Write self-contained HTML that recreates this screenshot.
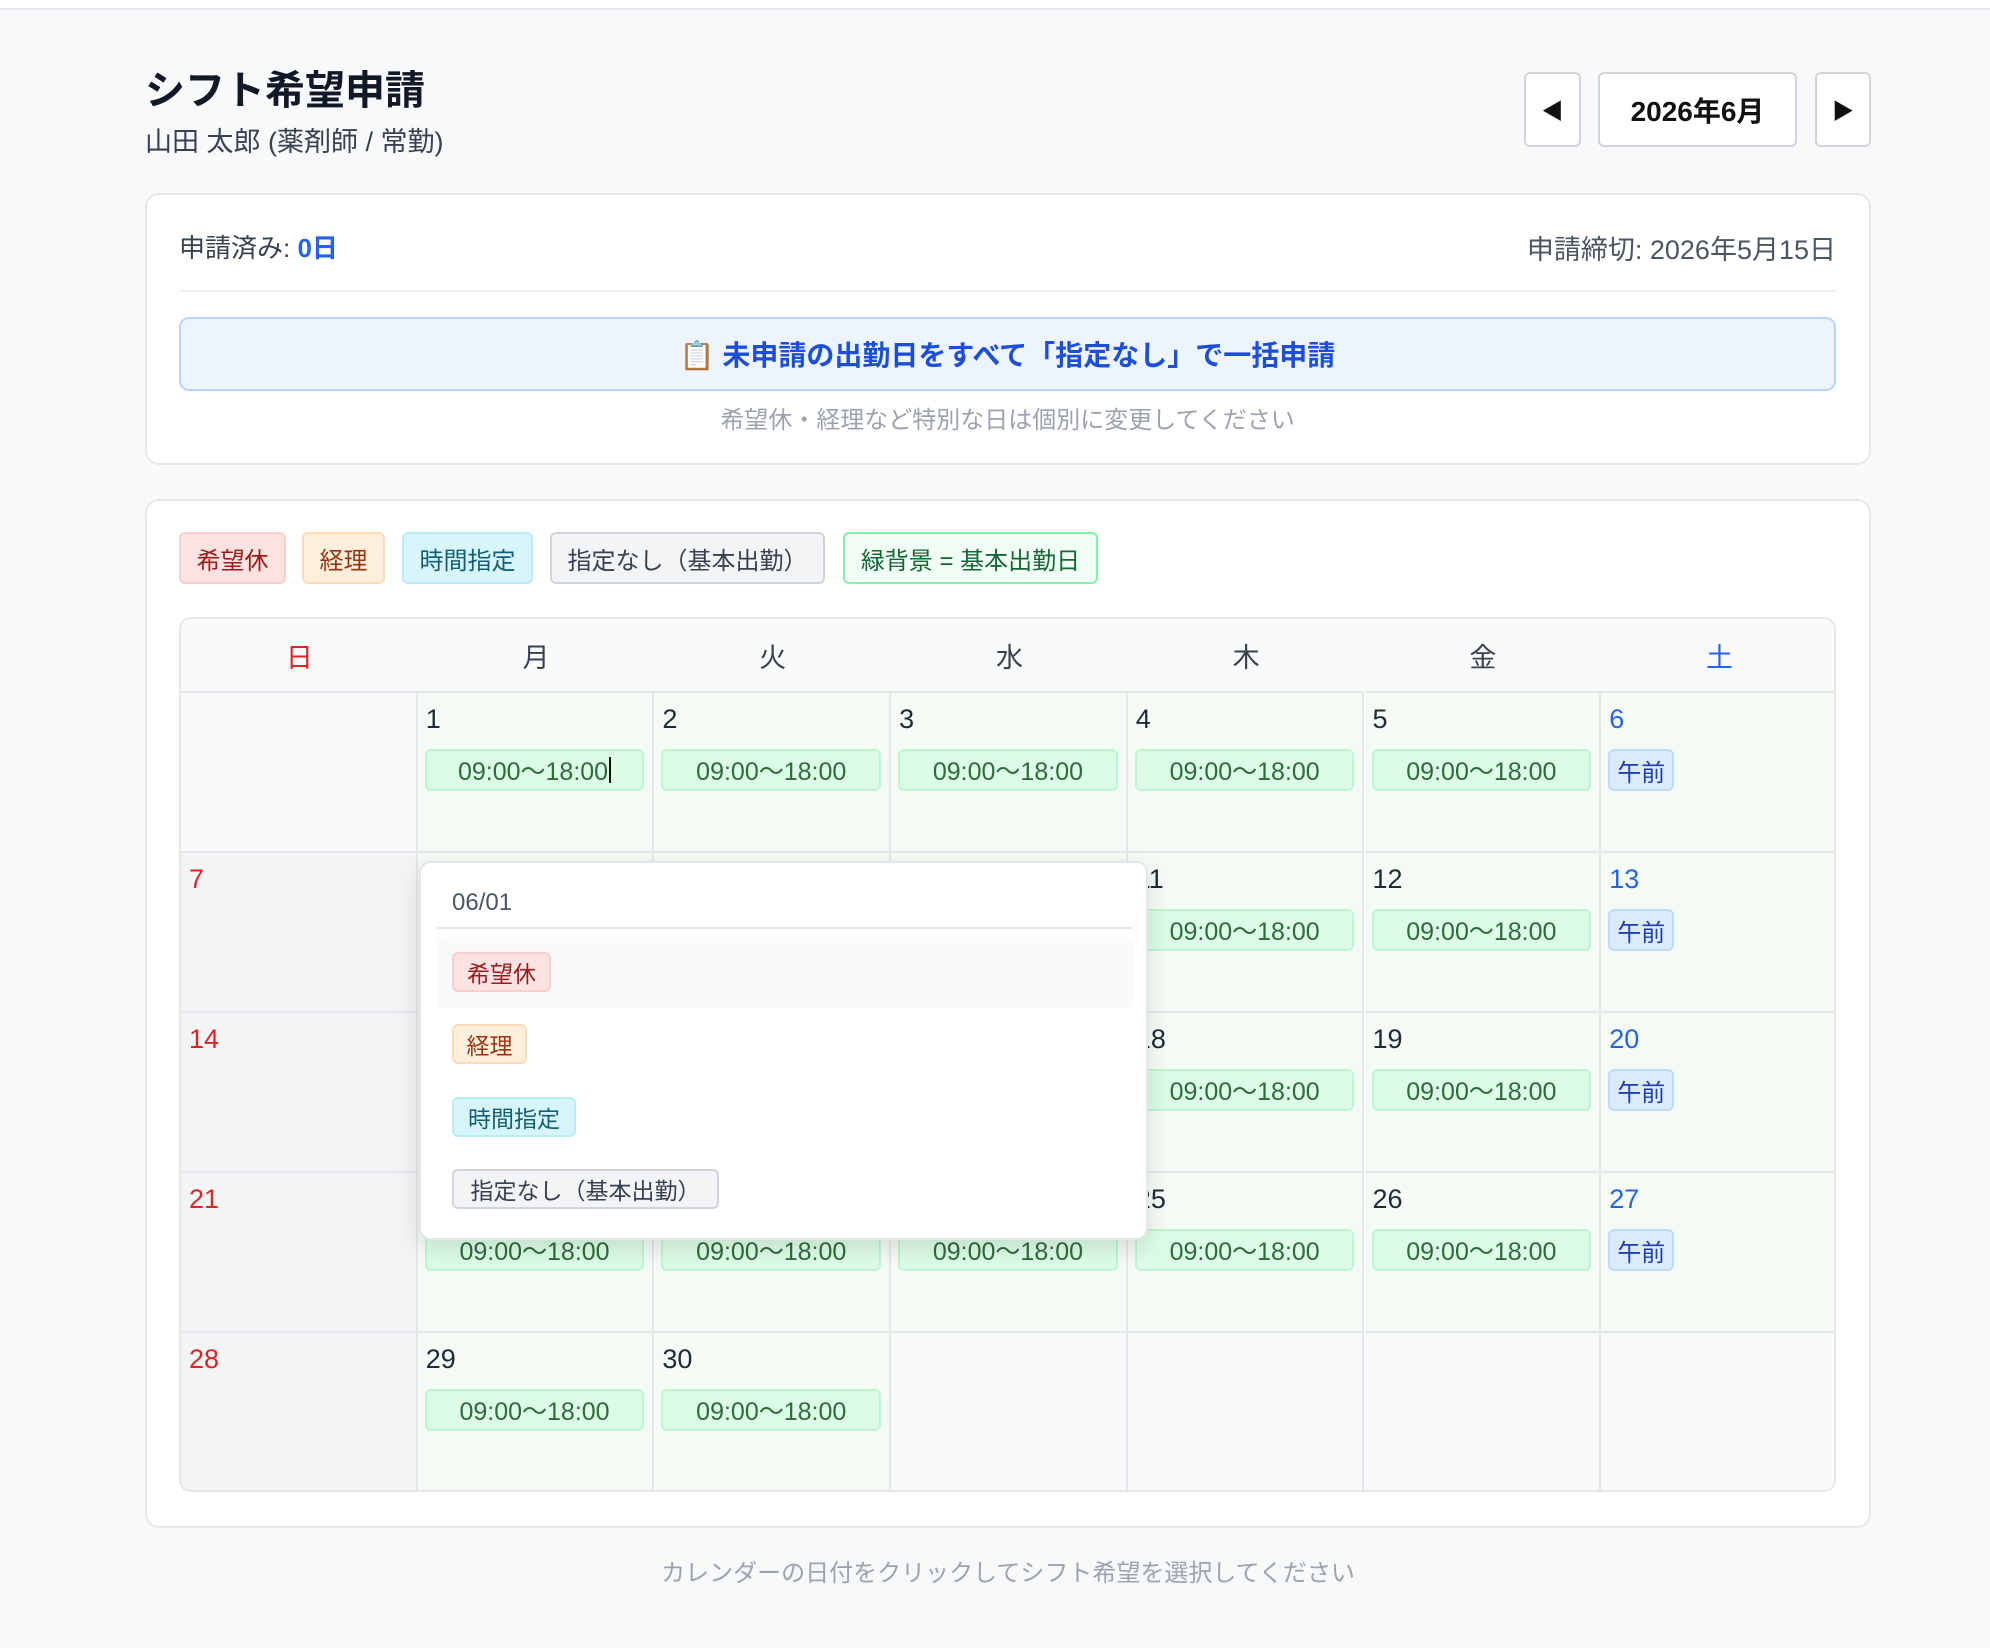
<!DOCTYPE html>
<html><head><meta charset="utf-8"><style>
*{box-sizing:border-box;margin:0;padding:0}
body{width:1990px;height:1648px;background:#f8f9fb;font-family:"Liberation Sans","Noto Sans CJK JP",sans-serif;position:relative;overflow:hidden;color:#111827}
.abs{position:absolute}
.topbar{left:0;top:0;width:1990px;height:10px;background:#fff;border-bottom:2px solid #e8e9ec}
.title{left:145px;top:58px;font-size:40px;font-weight:700;color:#111827}
.sub{left:145px;top:120px;font-size:27px;color:#374151}
.btn{background:#fff;border:2px solid #d1d5db;border-radius:6px;display:flex;align-items:center;justify-content:center;font-weight:700;color:#111}
.card{background:#fff;border:2px solid #e5e7eb;border-radius:14px}
.badge{position:absolute;border-radius:6px;display:flex;align-items:center;justify-content:center;font-size:24px;border:2px solid}
.red{background:#fde2e2;border-color:#f9d0d0;color:#991b1b}
.org{background:#feefdc;border-color:#fbdcb8;color:#9a3412}
.cyan{background:#d6f6fc;border-color:#b9ecf7;color:#155e75}
.gray{background:#f3f4f6;border-color:#d1d5db;color:#374151}
.grn{background:#f0fdf4;border-color:#86efac;color:#166534}
.cal{left:179px;top:617px;width:1657px;height:875px;border:2px solid #e5e7eb;border-radius:12px;overflow:hidden;background:#f9fafb}
.hd{position:absolute;top:0;height:72px;display:flex;align-items:center;justify-content:center;font-size:27px;color:#374151}
.cell{position:absolute;border-right:2px solid #e5e7eb;border-top:2px solid #e5e7eb;background:#f4fbf5}
.cell .n{position:absolute;left:8px;top:11px;font-size:27px;color:#1f2937}
.t{position:absolute;left:7px;right:8px;top:56px;height:42px;background:#dcfce7;border:2px solid #bbf7d0;border-radius:6px;color:#2f6b3a;font-size:25px;display:flex;align-items:center;justify-content:center}
.am{position:absolute;left:7px;top:56px;width:66px;height:42px;background:#dbeafe;border:2px solid #bfdbfe;border-radius:6px;color:#1e40af;font-size:24px;display:flex;align-items:center;justify-content:center}
.sun{background:#f3f4f6}.sun .n{color:#dc2626}
.sat .n{color:#2563eb}
.emp{background:#f9fafb}
</style></head><body>
<div class="abs topbar"></div>
<div class="abs title">シフト希望申請</div>
<div class="abs sub">山田 太郎 (薬剤師 / 常勤)</div>
<div class="abs btn" style="left:1524px;top:72px;width:57px;height:75px;font-size:22px">◀</div>
<div class="abs btn" style="left:1598px;top:72px;width:199px;height:75px;font-size:28px">2026年6月</div>
<div class="abs btn" style="left:1815px;top:72px;width:56px;height:75px;font-size:22px">▶</div>

<div class="abs card" style="left:145px;top:193px;width:1726px;height:272px"></div>
<div class="abs" style="left:179px;top:228px;font-size:26px;color:#374151">申請済み: <b style="color:#2563eb">0日</b></div>
<div class="abs" style="right:154px;top:228px;font-size:27px;color:#4b5563">申請締切: 2026年5月15日</div>
<div class="abs" style="left:179px;top:290px;width:1657px;height:2px;background:#eef0f2"></div>
<div class="abs" style="left:179px;top:317px;width:1657px;height:74px;background:#eef4fe;border:2px solid #bcd4fb;border-radius:10px;display:flex;align-items:center;justify-content:center;font-size:28px;font-weight:700;color:#1d4ed8">📋 未申請の出勤日をすべて「指定なし」で一括申請</div>
<div class="abs" style="left:179px;top:400px;width:1657px;text-align:center;font-size:24px;color:#9ca3af">希望休・経理など特別な日は個別に変更してください</div>

<div class="abs card" style="left:145px;top:499px;width:1726px;height:1029px"></div>
<div class="badge red" style="left:179px;top:532px;width:107px;height:52px">希望休</div>
<div class="badge org" style="left:302px;top:532px;width:83px;height:52px">経理</div>
<div class="badge cyan" style="left:402px;top:532px;width:131px;height:52px">時間指定</div>
<div class="badge gray" style="left:550px;top:532px;width:275px;height:52px">指定なし（基本出勤）</div>
<div class="badge grn" style="left:843px;top:532px;width:255px;height:52px">緑背景 = 基本出勤日</div>

<div class="abs cal" id="cal"></div>

<div class="abs" style="left:419px;top:861px;width:729px;height:379px;background:#fff;border:2px solid #e5e7eb;border-radius:12px;box-shadow:0 8px 24px rgba(0,0,0,0.12)">
 <div class="abs" style="left:31px;top:26px;font-size:24px;color:#4b5563">06/01</div>
 <div class="abs" style="left:16px;top:64px;width:696px;height:2px;background:#e5e7eb"></div>
 <div class="abs" style="left:16px;top:74px;width:696px;height:71px;background:#f9fafb;border-radius:6px"></div>
 <div class="badge red" style="left:31px;top:89px;width:99px;height:40px;font-size:23px">希望休</div>
 <div class="badge org" style="left:31px;top:161px;width:75px;height:40px;font-size:23px">経理</div>
 <div class="badge cyan" style="left:31px;top:234px;width:124px;height:40px;font-size:23px">時間指定</div>
 <div class="badge gray" style="left:31px;top:306px;width:267px;height:40px;font-size:23px">指定なし（基本出勤）</div>
</div>

<div class="abs" style="left:0;top:1553px;width:2016px;text-align:center;font-size:24px;color:#9ca3af">カレンダーの日付をクリックしてシフト希望を選択してください</div>

<script>
var cal=document.getElementById('cal');var h='';
var days=['日','月','火','水','木','金','土'];var cw=236.7;
for(var i=0;i<7;i++){var c=i==0?'#dc2626':(i==6?'#2563eb':'#374151');h+='<div class="hd" style="left:'+(i*cw)+'px;width:'+cw+'px;color:'+c+'">'+days[i]+'</div>';}
var rh=160;
for(var r=0;r<5;r++)for(var i=0;i<7;i++){var d=r*7+i;var cls='cell';var inner='';
 if(d<1||d>30){cls+=' emp';}
 else{ if(i==0)cls+=' sun'; if(i==6)cls+=' sat';
  inner='<div class="n">'+d+'</div>';
  if(i>=1&&i<=5)inner+='<div class="t">09:00〜18:00'+(d==1?'<span style="display:inline-block;width:2px;height:26px;background:#111;margin-left:1px"></span>':'')+'</div>';
  if(i==6)inner+='<div class="am">午前</div>';}
 h+='<div class="'+cls+'" style="left:'+(i*cw)+'px;top:'+(72+r*rh)+'px;width:'+cw+'px;height:'+rh+'px">'+inner+'</div>';}
cal.innerHTML=h;
</script>
</body></html>
